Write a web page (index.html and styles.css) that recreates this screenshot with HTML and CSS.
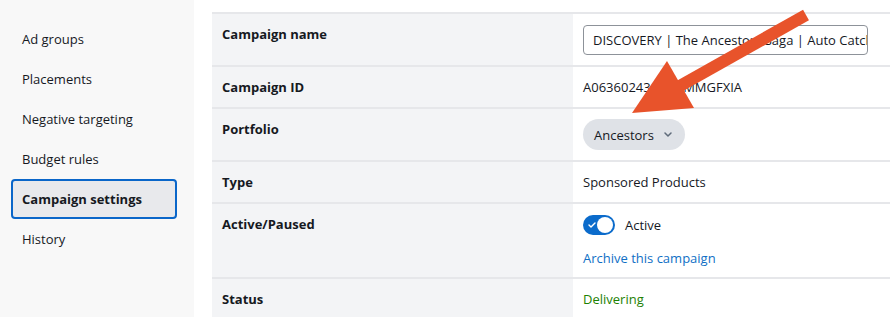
FILE: index.html
```html
<!DOCTYPE html>
<html lang="en">

<head>
  <meta charset="UTF-8">
  <meta name="viewport" content="width=device-width, initial-scale=1.0">
  <title>Campaign settings</title>
  <link rel="stylesheet" href="styles.css">
</head>

<body>
  <div class="page">
    <div class="sidebar">
      <a class="navItem">Ad groups</a>
      <a class="navItem">Placements</a>
      <a class="navItem">Negative targeting</a>
      <a class="navItem">Budget rules</a>
      <a class="navItem selected">Campaign settings</a>
      <a class="navItem">History</a>
    </div>

    <div class="main">
      <div class="settings">
        <div class="row">
          <div class="label">Campaign name</div>
          <div class="value inputCell">
            <div class="textBox">DISCOVERY | The Ancestors Saga | Auto Catch-all</div>
          </div>
        </div>
        <div class="row">
          <div class="label">Campaign ID</div>
          <div class="value">A06360243Q8X0MMGFXIA</div>
        </div>
        <div class="row">
          <div class="label">Portfolio</div>
          <div class="value pillCell">
            <span class="pill">Ancestors
              <svg width="8" height="5" viewBox="0 0 8 5"><path d="M1 1l3 3 3-3" fill="none" stroke="#5f6b7a" stroke-width="1.5" stroke-linecap="round" stroke-linejoin="round"/></svg>
            </span>
          </div>
        </div>
        <div class="row">
          <div class="label">Type</div>
          <div class="value">Sponsored Products</div>
        </div>
        <div class="row">
          <div class="label">Active/Paused</div>
          <div class="value toggleCell">
            <div class="toggleLine">
              <span class="toggle">
                <svg width="8" height="6" viewBox="0 0 8 6" class="check"><path d="M1 3l2 2 4-4" fill="none" stroke="#fff" stroke-width="1.4" stroke-linecap="round" stroke-linejoin="round"/></svg>
                <span class="knob"></span>
              </span>
              Active
            </div>
            <a class="link">Archive this campaign</a>
          </div>
        </div>
        <div class="row">
          <div class="label">Status</div>
          <div class="value delivering">Delivering</div>
        </div>
      </div>
    </div>
  </div>

  <!-- annotation arrow drawn over the screenshot -->
  <svg class="arrow" width="890" height="317" viewBox="0 0 890 317">
    <line x1="678" y1="87" x2="806" y2="15" stroke="#e8532b" stroke-width="12" />
    <polygon points="632,113 667,61 694,108" fill="#e8532b" />
  </svg>
</body>

</html>
```

FILE: styles.css
```css
html,
body {
  margin: 0;
  height: 100%;
  overflow: hidden;
}

body {
  font-family: 'Open Sans', 'Noto Sans', Arial, sans-serif;
  font-size: 13px;
  color: #16191f;
  background: #fff;
}

.page {
  display: flex;
  height: 100%;
}

.sidebar {
  width: 194px;
  flex-shrink: 0;
  background: #f8f8f8;
  padding-top: 19px;
  box-sizing: border-box;
  display: flex;
  flex-direction: column;
}

.navItem {
  display: block;
  height: 40px;
  line-height: 40px;
  padding-left: 22px;
  font-size: 13px;
}

.navItem.selected {
  margin: 0 17px 0 11px;
  padding-left: 9px;
  height: 36px;
  line-height: 36px;
  border: 2px solid #0a66c9;
  border-radius: 4px;
  background: #e8e9ec;
  font-weight: bold;
}

.main {
  flex: 1;
  min-width: 0;
  padding: 12px 0 0 18px;
}

.row {
  display: grid;
  grid-template-columns: 361px minmax(0, 1fr);
  border-top: 2px solid #e6e7ea;
  line-height: 16px;
}

.label {
  background: #f3f4f6;
  font-weight: bold;
  padding: 12px 10px 12px;
}

.value {
  padding: 12px 10px 12px;
}

.inputCell {
  padding: 11px 22px 10px 10px;
}

.textBox {
  height: 28px;
  line-height: 28px;
  border: 1px solid #8d9299;
  border-radius: 4px;
  padding: 0 9px;
  font-size: 13px;
  white-space: nowrap;
  overflow: hidden;
}

.pillCell {
  padding: 10px 10px;
}

.pill {
  display: inline-flex;
  align-items: center;
  gap: 10px;
  height: 31px;
  padding: 0 13px 0 11px;
  border-radius: 16px;
  background: #dfe2e7;
  font-size: 13px;
}

.toggleCell {
  padding: 11px 10px 11px;
}

.toggleLine {
  display: flex;
  align-items: center;
  gap: 10px;
  height: 20px;
}

.toggle {
  position: relative;
  width: 32px;
  height: 20px;
  border-radius: 10px;
  background: #0b6bcb;
}

.check {
  position: absolute;
  left: 5px;
  top: 7px;
}

.knob {
  position: absolute;
  right: 2px;
  top: 2px;
  width: 16px;
  height: 16px;
  border-radius: 50%;
  background: #fff;
}

.link {
  display: block;
  margin-top: 15px;
  color: #0f6fc5;
}

.delivering {
  color: #1d8102;
}

.arrow {
  position: absolute;
  top: 0;
  left: 0;
  pointer-events: none;
}
```
